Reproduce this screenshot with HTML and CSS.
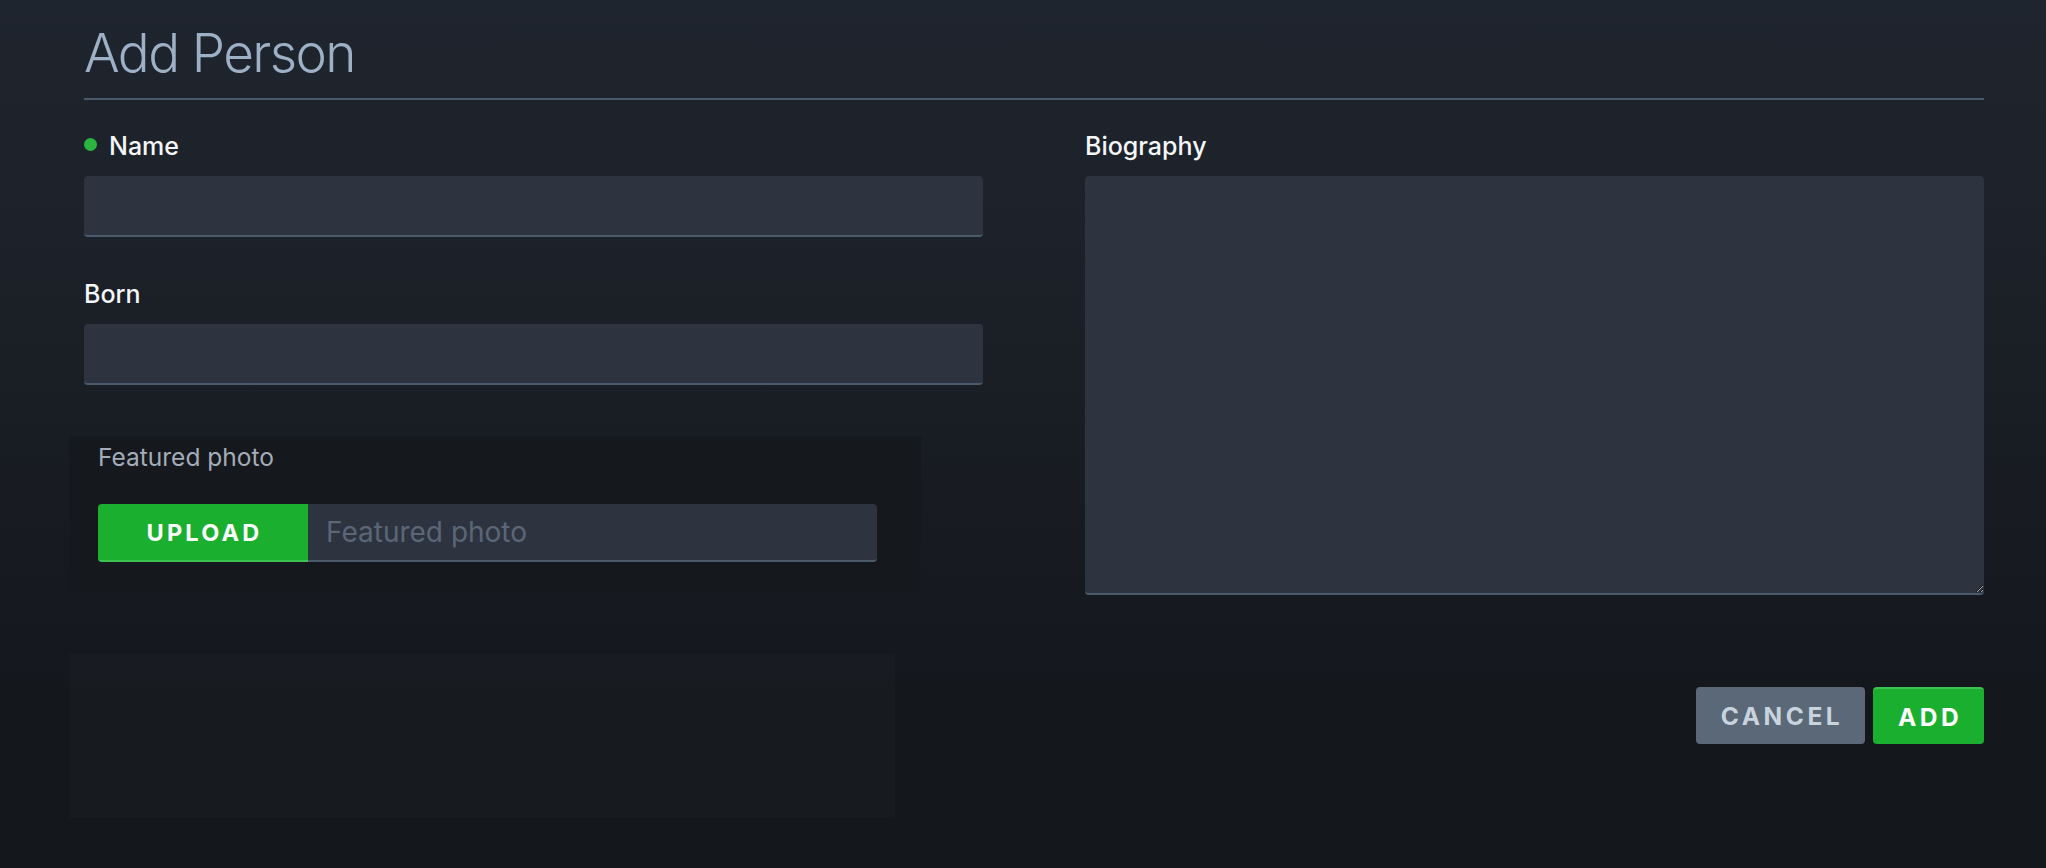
FILE: index.html
```html
<!DOCTYPE html>
<html lang="en">
<head>
<meta charset="utf-8">
<title>Add Person</title>
<link rel="stylesheet" href="styles.css">
</head>
<body>
<div class="page">
  <h1 class="title">Add Person</h1>
  <div class="form-grid">
    <div class="col">
      <div class="field">
        <label class="label"><span class="req-dot"></span>Name</label>
        <input class="text-input" type="text">
      </div>
      <div class="field field-born">
        <label class="label">Born</label>
        <input class="text-input" type="text">
      </div>
      <div class="photo-panel">
        <div class="photo-label">Featured photo</div>
        <div class="upload-row">
          <button class="upload-btn" type="button">UPLOAD</button>
          <input class="upload-input" type="text" placeholder="Featured photo">
        </div>
      </div>
      <div class="dim-panel"></div>
    </div>
    <div class="col">
      <div class="field">
        <label class="label">Biography</label>
        <textarea class="bio"></textarea>
      </div>
      <div class="actions">
        <button class="btn btn-cancel" type="button">CANCEL</button>
        <button class="btn btn-add" type="button">ADD</button>
      </div>
    </div>
  </div>
</div>
</body>
</html>
```
FILE: styles.css
```css
html, body {
  margin: 0;
  padding: 0;
}
body {
  min-height: 868px;
  background: linear-gradient(180deg, #1f252e 0%, #1c2129 30%, #181c22 55%, #14171c 80%, #14171c 100%);
  font-family: "Inter", "Noto Sans", "Liberation Sans", sans-serif;
  color: #ffffff;
}
.page {
  padding: 20px 62px 0 84px;
  width: 1900px;
}
.title {
  margin: 0;
  font-size: 53px;
  font-weight: 300;
  line-height: 66px;
  color: #9eb0c5;
  padding-bottom: 12px;
  border-bottom: 2px solid #4a5a6a;
  letter-spacing: -1.6px;
}
.form-grid {
  display: grid;
  grid-template-columns: 899px 899px;
  column-gap: 102px;
  margin-top: 31px;
  align-items: start;
}
.col {
  display: flex;
  flex-direction: column;
}
.field {
  display: flex;
  flex-direction: column;
}
.field-born {
  margin-top: 42px;
}
.label {
  display: flex;
  align-items: center;
  font-size: 25px;
  line-height: 30px;
  font-weight: 500;
  color: #f4f6f8;
}
.req-dot {
  width: 13px;
  height: 13px;
  border-radius: 50%;
  background: #2bb540;
  margin-right: 12px;
  margin-top: -3px;
}
.text-input, .bio, .upload-input {
  box-sizing: border-box;
  border: none;
  border-bottom: 2px solid #4b5b6c;
  background: #2d3440;
  color: #ffffff;
  font-family: inherit;
  outline: none;
}
.text-input {
  margin-top: 15px;
  height: 61px;
  border-radius: 4px;
  font-size: 24px;
  padding: 0 18px;
}
.photo-panel {
  margin-top: 51px;
  margin-left: -15px;
  width: 852px;
  box-sizing: border-box;
  padding: 6px 0 30px 29px;
  background: #15181d;
}
.photo-label {
  font-size: 24.5px;
  line-height: 30px;
  color: #a3adb8;
}
.upload-row {
  display: flex;
  margin-top: 32px;
  width: 779px;
  height: 58px;
}
.upload-btn {
  width: 210px;
  border: none;
  border-bottom: 2px solid #3dc352;
  border-radius: 4px 0 0 4px;
  background: #1aaf2f;
  color: #ffffff;
  font-family: inherit;
  font-weight: 700;
  font-size: 23.5px;
  letter-spacing: 3.2px;
  padding: 0 0 0 3px;
}
.upload-input {
  flex: 1;
  border-radius: 0 4px 4px 0;
  font-size: 28px;
  padding: 0 18px;
}
.upload-input::placeholder {
  color: #5b6676;
}
.dim-panel {
  margin-top: 62px;
  margin-left: -15px;
  width: 826px;
  height: 164px;
  background: rgba(255, 255, 255, 0.016);
}
.bio {
  margin-top: 15px;
  height: 419px;
  border-radius: 4px;
  font-size: 24px;
  padding: 14px 18px;
  resize: vertical;
}
.actions {
  display: flex;
  justify-content: flex-end;
  gap: 8px;
  margin-top: 92px;
}
.btn {
  height: 57px;
  border: none;
  border-radius: 4px;
  font-family: inherit;
  font-weight: 700;
  font-size: 24.5px;
  letter-spacing: 3.5px;
  padding: 0 0 0 3px;
}
.btn-cancel {
  width: 169px;
  background: #5a6878;
  color: #c9d3de;
}
.btn-add {
  width: 111px;
  background: #1aaf2f;
  border-top: 2px solid #3cc250;
  color: #ffffff;
}
```
